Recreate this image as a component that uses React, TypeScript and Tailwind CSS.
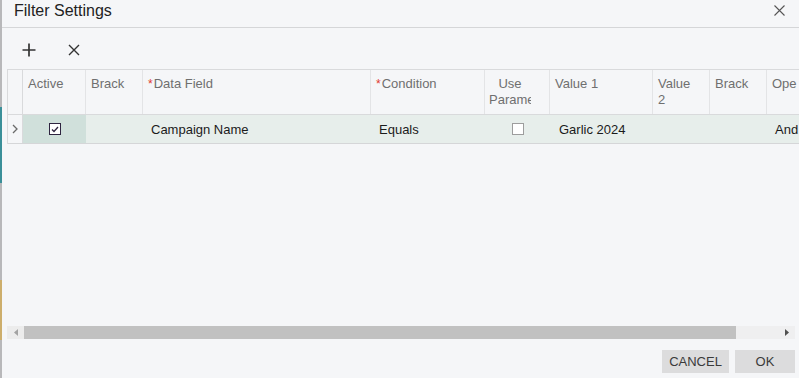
import React from "react";

const cols = "grid-cols-[15px_63px_57px_228px_114px_65px_103px_57px_57px_100px]";

const HeaderCell = ({ children, className = "", required }: { children?: React.ReactNode; className?: string; required?: boolean }) => (
    <div className={`border-r border-[#e3e4e6] pt-[6px] text-[13px] leading-[16px] text-[#6f6f6f] overflow-hidden whitespace-nowrap ${className || "pl-[5px] pr-1"}`}>
        {required && <span className="text-[#e0382e] mr-[1px] text-[12px] align-top">*</span>}
        {children}
    </div>
);

const CheckBox = ({ checked }: { checked?: boolean }) => (
    checked ? (
        <div className="w-[12px] h-[12px] border border-[#2e2440] bg-white flex items-center justify-center">
            <svg width="8" height="7" viewBox="0 0 8 7">
                <path d="M1 3.5 L3 5.5 L7 1" fill="none" stroke="#2e2440" strokeWidth="1.3" />
            </svg>
        </div>
    ) : (
        <div className="w-[12px] h-[12px] border border-[#9d9d9d] bg-white" />
    )
);

const App = () => {
    return (
        <div className="w-[799px] h-[378px] flex bg-[#f5f6f8] overflow-hidden font-['Liberation_Sans',Arial,sans-serif]">
            {/* bits of the page behind the dialog */}
            <div className="w-[2px] flex flex-col shrink-0">
                <div className="h-[107px] bg-[#b8b8ba]" />
                <div className="h-[76px] bg-[#3a8f99]" />
                <div className="h-[97px] bg-[#b8b8ba]" />
                <div className="h-[60px] bg-[#cdae6c]" />
                <div className="flex-1 bg-[#b8b8ba]" />
            </div>

            <div className="flex-1 flex flex-col min-w-0">
                {/* title */}
                <div className="h-[28px] shrink-0 border-b border-[#d5d6d8] flex items-start justify-between pl-3 pr-[14px] pt-[2px]">
                    <span className="text-[16px] leading-[18px] text-[#222]">Filter Settings</span>
                    <svg width="11" height="11" viewBox="0 0 11 11" className="mt-[3px]">
                        <path d="M0.5 0.5 L10.5 10.5 M10.5 0.5 L0.5 10.5" stroke="#555" strokeWidth="1.1" />
                    </svg>
                </div>

                {/* toolbar */}
                <div className="h-[41px] shrink-0 flex items-center pl-[20px] pt-[3px] gap-[32px]">
                    <svg width="14" height="14" viewBox="0 0 14 14">
                        <path d="M7 0.5 V13.5 M0.5 7 H13.5" stroke="#333" strokeWidth="1.7" />
                    </svg>
                    <svg width="12" height="12" viewBox="0 0 12 12">
                        <path d="M1 1 L11 11 M11 1 L1 11" stroke="#333" strokeWidth="1.4" />
                    </svg>
                </div>

                {/* grid */}
                <div className="h-[257px] shrink-0 ml-[5px] overflow-hidden">
                    <div className="w-[900px] border-l border-t border-[#d9dadc]">
                        <div className={`grid ${cols} h-[45px] border-b border-[#d9dadc]`}>
                            <div className="border-r border-[#d9dadc]" />
                            <HeaderCell>Active</HeaderCell>
                            <HeaderCell>Brack</HeaderCell>
                            <HeaderCell required>Data Field</HeaderCell>
                            <HeaderCell required>Condition</HeaderCell>
                            <HeaderCell className="pl-[4px] pr-[18px]">
                                <div className="w-[42px] overflow-hidden text-center">Use<br />Parame</div>
                            </HeaderCell>
                            <HeaderCell>Value 1</HeaderCell>
                            <HeaderCell>Value<br />2</HeaderCell>
                            <HeaderCell>Brack</HeaderCell>
                            <HeaderCell>Ope</HeaderCell>
                        </div>
                        <div className={`grid ${cols} h-[29px] border-b border-[#d5d6d8] bg-[#e7eeeb] text-[13px] text-[#1b1b1b]`}>
                            <div className="border-r border-[#d9dadc] bg-[#f5f6f8] flex items-center pl-[4px]">
                                <svg width="6" height="10" viewBox="0 0 6 10">
                                    <path d="M1 1 L5 5 L1 9" fill="none" stroke="#6a6a6a" strokeWidth="1.3" />
                                </svg>
                            </div>
                            <div className="bg-[#d0e0db] flex items-center justify-center">
                                <CheckBox checked />
                            </div>
                            <div />
                            <div className="flex items-center pl-2 pt-[1px]">Campaign Name</div>
                            <div className="flex items-center pl-2 pt-[1px]">Equals</div>
                            <div className="flex items-center justify-center">
                                <CheckBox />
                            </div>
                            <div className="flex items-center pl-[9px] pt-[1px]">Garlic 2024</div>
                            <div />
                            <div />
                            <div className="flex items-center pl-2 pt-[1px]">And</div>
                        </div>
                    </div>
                </div>

                {/* horizontal scrollbar */}
                <div className="h-[13px] shrink-0 ml-[5px] mr-[4px] flex bg-[#efeff0]">
                    <div className="w-[17px] flex items-center justify-center bg-[#ececec]">
                        <svg width="4" height="7" viewBox="0 0 4 7">
                            <path d="M4 0 L0 3.5 L4 7 Z" fill="#a3a3a3" />
                        </svg>
                    </div>
                    <div className="w-[712px] bg-[#c1c1c1]" />
                    <div className="flex-1 flex items-center justify-end pr-[6px]">
                        <svg width="4" height="7" viewBox="0 0 4 7">
                            <path d="M0 0 L4 3.5 L0 7 Z" fill="#505050" />
                        </svg>
                    </div>
                </div>

                {/* footer */}
                <div className="flex justify-end gap-[6px] mt-[11px] mr-[4px]">
                    <button className="w-[67px] h-[23px] bg-[#dcdcdd] text-[13px] text-[#3a3a3a]">CANCEL</button>
                    <button className="w-[60px] h-[23px] bg-[#dcdcdd] text-[13px] text-[#3a3a3a]">OK</button>
                </div>
            </div>
        </div>
    );
};

export default App;
